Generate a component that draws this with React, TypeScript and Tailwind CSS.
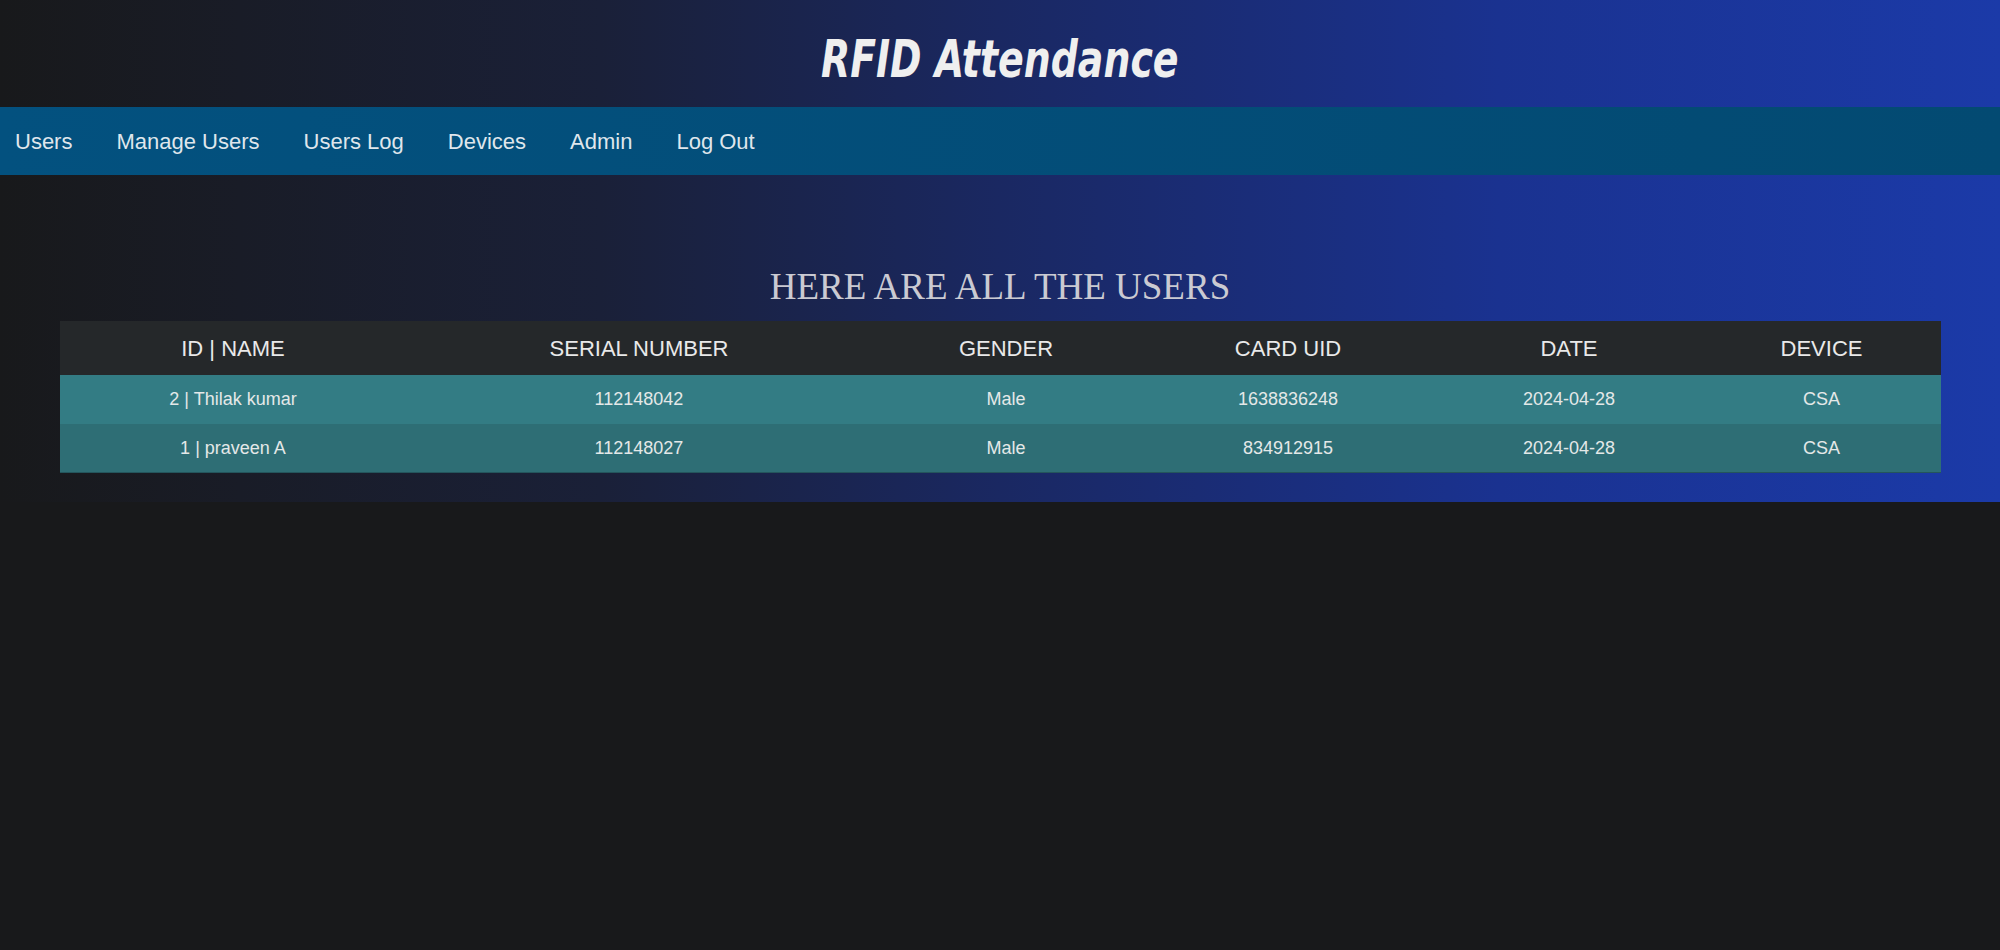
import React from 'react';

type User = {
  id: number;
  name: string;
  serial: string;
  gender: string;
  uid: string;
  date: string;
  device: string;
};

const users: User[] = [
  { id: 2, name: 'Thilak kumar', serial: '112148042', gender: 'Male', uid: '1638836248', date: '2024-04-28', device: 'CSA' },
  { id: 1, name: 'praveen A', serial: '112148027', gender: 'Male', uid: '834912915', date: '2024-04-28', device: 'CSA' },
];

const columns = ['ID | NAME', 'SERIAL NUMBER', 'GENDER', 'CARD UID', 'DATE', 'DEVICE'];
const navLinks = ['Users', 'Manage Users', 'Users Log', 'Devices', 'Admin', 'Log Out'];

const gridCols = 'grid grid-cols-[346px_466px_268px_296px_266px_239px]';

export default function App() {
  return (
    <div className="min-h-screen w-full bg-[#18191b] font-['Liberation_Sans',Arial,sans-serif]">
      <div className="bg-[linear-gradient(to_right,#18191b_0%,#191c27_12%,#1a2038_30%,#1a2862_50%,#1a3290_75%,#1b3aa8_100%)]">
        {/* TITLE */}
        <header className="h-[107px] flex items-center justify-center">
          <h1 className="inline-block scale-x-[0.81] text-[52px] leading-none font-bold italic text-[#efefef] font-['DejaVu_Sans_Condensed','DejaVu_Sans',sans-serif] mt-[10px]">
            RFID Attendance
          </h1>
        </header>

        {/* NAV */}
        <nav className="h-[68px] flex items-center gap-[44px] pl-[15px] bg-[linear-gradient(to_right,#03517f,#034a72)]">
          {navLinks.map((link) => (
            <a key={link} href="#" className="text-[22px] text-[#dfe6ec] whitespace-nowrap">
              {link}
            </a>
          ))}
        </nav>

        {/* USERS TABLE */}
        <main className="pt-[91px] pb-[29px] px-[60px]">
          <h2 className="text-center text-[37px] leading-[42px] mb-[13px] text-[#cacad2] font-['Liberation_Serif','Times_New_Roman',serif]">
            HERE ARE ALL THE USERS
          </h2>
          <div className="w-[1881px]">
            <div className={`${gridCols} h-[54px] bg-[#25282a] text-[22px] text-[#e9e9e9]`}>
              {columns.map((c) => (
                <div key={c} className="flex items-center justify-center">{c}</div>
              ))}
            </div>
            {users.map((u, i) => (
              <div
                key={u.id}
                className={`${gridCols} h-[49px] text-[18px] text-[#e4e8e8] ${i % 2 === 0 ? 'bg-[#337c84]' : 'bg-[#2e6e75] border-b border-[#24555c]'}`}
              >
                <div className="flex items-center justify-center">{u.id} | {u.name}</div>
                <div className="flex items-center justify-center">{u.serial}</div>
                <div className="flex items-center justify-center">{u.gender}</div>
                <div className="flex items-center justify-center">{u.uid}</div>
                <div className="flex items-center justify-center">{u.date}</div>
                <div className="flex items-center justify-center">{u.device}</div>
              </div>
            ))}
          </div>
        </main>
      </div>
    </div>
  );
}
